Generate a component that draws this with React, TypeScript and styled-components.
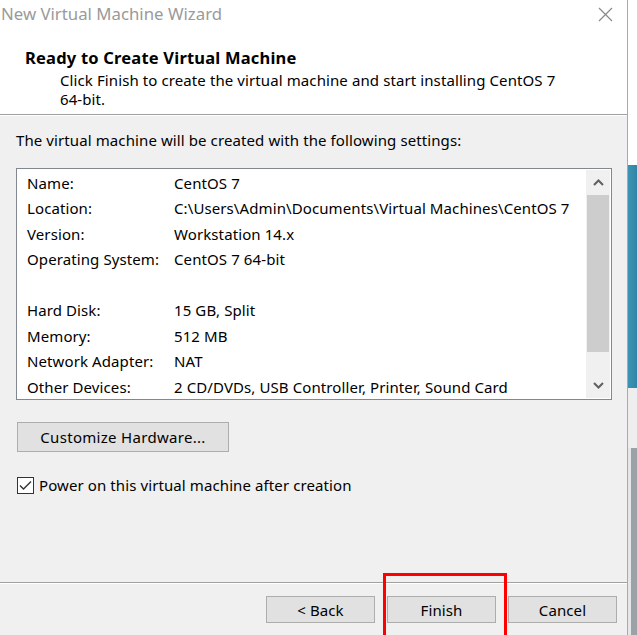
import React from "react";
import styled, { createGlobalStyle } from "styled-components";

const GlobalStyle = createGlobalStyle`
  html, body { margin: 0; padding: 0; }
  body {
    background: #ffffff;
    font-family: "Segoe UI", "Noto Sans", "Open Sans", sans-serif;
    letter-spacing: 0.1px;
    -webkit-font-smoothing: antialiased;
  }
`;

const Page = styled.div`
  display: flex;
  width: 637px;
  height: 635px;
  overflow: hidden;
`;

const Window = styled.div`
  position: relative;
  display: flex;
  flex-direction: column;
  width: 628px;
  height: 635px;
  border-right: 1px solid #a9a9a9;
  background: #f0f0f0;
  box-sizing: border-box;
`;

const Desktop = styled.div`
  flex: 1;
  display: flex;
  flex-direction: column;
`;

const DesktopBand = styled.div<{ $h: number; $bg: string }>`
  height: ${(p) => p.$h}px;
  background: ${(p) => p.$bg};
  flex-shrink: 0;
`;

const TitleBar = styled.div`
  display: flex;
  align-items: center;
  justify-content: space-between;
  height: 30px;
  padding: 0 14px 0 1px;
  background: #ffffff;
`;

const TitleText = styled.span`
  font-size: 16.8px;
  letter-spacing: 0;
  color: #9a9a9a;
  margin-top: -4px;
`;

const CloseIcon = styled.svg`
  width: 15px;
  height: 15px;
  margin-top: -2px;
`;

const Header = styled.div`
  height: 85px;
  background: #ffffff;
  border-bottom: 1px solid #a0a0a0;
  box-shadow: 0 1px 0 #ffffff;
  padding: 17px 0 0 25px;
  box-sizing: border-box;
`;

const Heading = styled.div`
  font-size: 16.5px;
  font-weight: 700;
  letter-spacing: 0.2px;
  color: #000;
  line-height: 21px;
`;

const SubText = styled.div`
  margin-top: 3px;
  font-size: 15px;
  color: #000;
  line-height: 19px;
  padding-left: 35px;
  width: 505px;
`;

const Body = styled.div`
  flex: 1;
  padding: 15px 15px 0 16px;
  display: flex;
  flex-direction: column;
`;

const Intro = styled.div`
  font-size: 15px;
  color: #000;
  line-height: 20px;
`;

const ListBox = styled.div`
  margin-top: 18px;
  height: 232px;
  border: 1px solid #828790;
  background: #ffffff;
  display: flex;
  box-sizing: border-box;
`;

const Rows = styled.div`
  flex: 1;
  padding: 1px 0 0 10px;
`;

const Row = styled.div`
  display: grid;
  grid-template-columns: 147px 1fr;
  height: 25.5px;
  align-items: center;
  font-size: 15px;
  color: #000;
  white-space: nowrap;
`;

const ScrollBar = styled.div`
  width: 24px;
  margin: 1px 1px 1px 0;
  background: #f0f0f0;
  display: flex;
  flex-direction: column;
  align-items: center;
`;

const ArrowBtn = styled.div`
  height: 25px;
  width: 100%;
  display: flex;
  align-items: center;
  justify-content: center;
`;

const Thumb = styled.div`
  width: 22px;
  height: 157px;
  background: #cdcdcd;
`;

const Track = styled.div`
  flex: 1;
`;

const CustomizeButton = styled.button`
  margin-top: 22px;
  margin-left: 1px;
  width: 212px;
  height: 30px;
  background: #e1e1e1;
  border: 1px solid #adadad;
  font-family: inherit;
  font-size: 15px;
  letter-spacing: 0.3px;
  color: #000;
  padding: 0;
`;

const CheckRow = styled.label`
  display: flex;
  align-items: center;
  gap: 5px;
  margin-top: 23px;
  margin-left: 1px;
  font-size: 15px;
  color: #000;
`;

const CheckBox = styled.span`
  width: 17px;
  height: 17px;
  box-sizing: border-box;
  border: 1px solid #333;
  background: #fff;
  display: flex;
  align-items: center;
  justify-content: center;
`;

const Footer = styled.div`
  height: 53px;
  border-top: 1px solid #a0a0a0;
  box-shadow: inset 0 1px 0 #ffffff;
  display: flex;
  justify-content: flex-end;
  gap: 12px;
  padding: 13px 10px 0 0;
  box-sizing: border-box;
`;

const DialogButton = styled.button`
  width: 109px;
  height: 27px;
  background: #e1e1e1;
  border: 1px solid #adadad;
  font-family: inherit;
  font-size: 15px;
  letter-spacing: 0.1px;
  color: #000;
  padding: 0;
`;

const Highlight = styled.div`
  position: absolute;
  left: 383px;
  top: 573px;
  width: 124px;
  height: 80px;
  border: 3px solid #ff0000;
  box-sizing: border-box;
  pointer-events: none;
`;

const rows: [string, string][] = [
  ["Name:", "CentOS 7"],
  ["Location:", "C:\\Users\\Admin\\Documents\\Virtual Machines\\CentOS 7"],
  ["Version:", "Workstation 14.x"],
  ["Operating System:", "CentOS 7 64-bit"],
  ["", ""],
  ["Hard Disk:", "15 GB, Split"],
  ["Memory:", "512 MB"],
  ["Network Adapter:", "NAT"],
  ["Other Devices:", "2 CD/DVDs, USB Controller, Printer, Sound Card"],
];

export default function App() {
  return (
    <>
      <GlobalStyle />
      <Page>
        <Window>
          <TitleBar>
            <TitleText>New Virtual Machine Wizard</TitleText>
            <CloseIcon viewBox="0 0 15 15">
              <path d="M1 1 L14 14 M14 1 L1 14" stroke="#8a8a8a" strokeWidth="1.2" fill="none" />
            </CloseIcon>
          </TitleBar>
          <Header>
            <Heading>Ready to Create Virtual Machine</Heading>
            <SubText>
              Click Finish to create the virtual machine and start installing CentOS 7 64-bit.
            </SubText>
          </Header>
          <Body>
            <Intro>The virtual machine will be created with the following settings:</Intro>
            <ListBox>
              <Rows>
                {rows.map(([k, v], i) => (
                  <Row key={i}>
                    <span>{k}</span>
                    <span>{v}</span>
                  </Row>
                ))}
              </Rows>
              <ScrollBar>
                <ArrowBtn>
                  <svg width="11" height="7" viewBox="0 0 11 7">
                    <path d="M1 6 L5.5 1.5 L10 6" stroke="#606060" strokeWidth="2" fill="none" />
                  </svg>
                </ArrowBtn>
                <Thumb />
                <Track />
                <ArrowBtn>
                  <svg width="11" height="7" viewBox="0 0 11 7">
                    <path d="M1 1 L5.5 5.5 L10 1" stroke="#606060" strokeWidth="2" fill="none" />
                  </svg>
                </ArrowBtn>
              </ScrollBar>
            </ListBox>
            <CustomizeButton>Customize Hardware...</CustomizeButton>
            <CheckRow>
              <CheckBox>
                <svg width="13" height="11" viewBox="0 0 13 11">
                  <path d="M1 5.5 L4.5 9 L12 1.5" stroke="#333" strokeWidth="1.4" fill="none" />
                </svg>
              </CheckBox>
              Power on this virtual machine after creation
            </CheckRow>
          </Body>
          <Footer>
            <DialogButton>&lt; Back</DialogButton>
            <DialogButton>Finish</DialogButton>
            <DialogButton>Cancel</DialogButton>
          </Footer>
          <Highlight />
        </Window>
        <Desktop>
          <DesktopBand $h={165} $bg="#ffffff" />
          <DesktopBand $h={223} $bg="linear-gradient(90deg, #3d93b3, #2f85a8)" />
          <DesktopBand $h={60} $bg="#eeeeee" />
          <DesktopBand $h={187} $bg="linear-gradient(90deg, #e6e6e6 0 3px, #9aa2a8 3px)" />
        </Desktop>
      </Page>
    </>
  );
}
